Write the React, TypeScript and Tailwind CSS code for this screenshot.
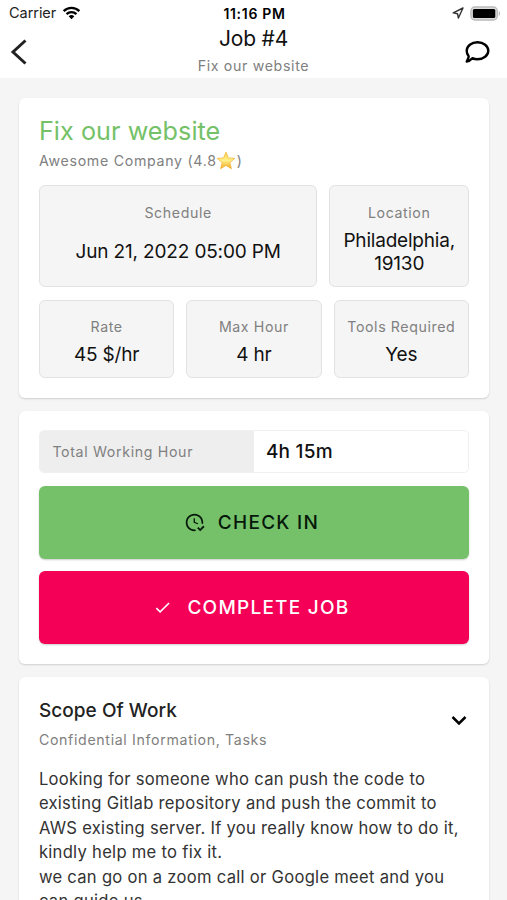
import type { ReactNode } from "react";

interface StatProps {
  label: string;
  children: ReactNode;
  className?: string;
}

const scope = [
  "Looking for someone who can push the code to existing Gitlab repository and push the commit to AWS existing server. If you really know how to do it, kindly help me to fix it.",
  "we can go on a zoom call or Google meet and you can guide us.",
];

function WifiIcon() {
  return (
    <svg width="19" height="14" viewBox="0 0 20 15" fill="none" stroke="#000" strokeWidth="2.6">
      <path d="M1.6 5.4a12 12 0 0 1 16.8 0" />
      <path d="M4.7 8.7a7.6 7.6 0 0 1 10.6 0" />
      <path d="M10 14.2l-3-3.1a4.3 4.3 0 0 1 6 0z" fill="#000" stroke="none" />
    </svg>
  );
}

function StatusBar() {
  return (
    <div className="flex h-[26px] items-center text-[14.5px] leading-[26px]">
      <div className="flex flex-1 items-center gap-[6px] pl-[9px] text-[#222]">
        <span className="tracking-[-0.05px]">Carrier</span>
        <WifiIcon />
      </div>
      <span className="pt-[1px] pr-[1px] text-[14px] font-semibold tracking-[0.7px] text-black">11:16 PM</span>
      <div className="flex flex-1 items-center justify-end gap-[6px] pr-[6px]">
        <svg width="12" height="12" viewBox="0 0 12 12" fill="none" stroke="#333" strokeWidth="1.4" strokeLinejoin="round">
          <path d="M11 1L1.2 5.9l4.3.8.9 4.3z" />
        </svg>
        <svg width="31" height="15" viewBox="0 0 31 15">
          <rect x=".9" y="1" width="26.4" height="13" rx="4" fill="#ddd" stroke="#bbb" strokeWidth="1.4" />
          <rect x="2.9" y="3" width="22.4" height="9" rx="1.5" fill="#000" />
          <path d="M28.8 5v5c1.8-.8 1.8-4.2 0-5z" fill="#bbb" />
        </svg>
      </div>
    </div>
  );
}

function Header() {
  return (
    <header className="h-[78px] bg-white">
      <StatusBar />
      <div className="grid h-[52px] grid-cols-[1fr_auto_1fr] items-start">
        <svg className="mt-[12px] ml-[10px]" width="18" height="28" viewBox="0 0 18 28" fill="none" stroke="#222" strokeWidth="3">
          <path d="M15.5 2.5L3 14l12.5 11.500" />
        </svg>
        <div className="flex flex-col items-center">
          <h1 className="mt-[1px] text-[21px] leading-[24px] tracking-[-0.2px] text-[#111]">Job #4</h1>
          <p className="mt-[5px] text-[14.2px] leading-[20px] tracking-[0.65px] text-[#808080]">Fix our website</p>
        </div>
        <svg className="mt-[14px] mr-[17px] justify-self-end" width="26" height="24" viewBox="0 0 26 24">
          <path
            d="M13.5 2.300c6 0 10.800 3.800 10.800 8.500s-4.800 8.500-10.800 8.500c-1.900 0-3.700-.4-5.200-1.100-1.500 1.700-3.300 3-5.600 3.400 1-1.600 1.800-3.200 2-5.200-1.300-1.500-2-3.500-2-5.600 0-4.700 4.800-8.500 10.800-8.500z"
            fill="none"
            stroke="#000"
            strokeWidth="2.4"
            strokeLinejoin="round"
          />
        </svg>
      </div>
    </header>
  );
}

function Card({ children, className = "" }: { children: ReactNode; className?: string }) {
  return (
    <section className={`rounded-[6px] bg-white px-[19.5px] shadow-[0_1px_2px_rgba(0,0,0,0.16)] ${className}`}>
      {children}
    </section>
  );
}

function Stat({ label, children, className = "" }: StatProps) {
  return (
    <div className={`flex flex-col items-center rounded-[6px] border border-[#e2e2e2] bg-[#f5f5f5] text-center ${className}`}>
      <span className="text-[14.2px] leading-[20px] tracking-[0.6px] whitespace-nowrap text-[#808080]">{label}</span>
      {children}
    </div>
  );
}

function Star() {
  return (
    <svg className="-ml-[1px] mr-[1px] inline-block align-[-4px]" width="20" height="19" viewBox="0 0 20 19">
      <defs>
        <linearGradient id="star" x1="0" y1="0" x2="0" y2="1">
          <stop offset="0" stopColor="#fbd24a" />
          <stop offset=".5" stopColor="#fff08a" />
          <stop offset="1" stopColor="#f2a51f" />
        </linearGradient>
      </defs>
      <path
        d="M10 1.200l2.400 5.700 6.400.5-4.900 4.100 1.500 6.200-5.400-3.300-5.400 3.300 1.500-6.200L1.200 7.400l6.400-.5z"
        fill="url(#star)"
        stroke="#f3b63a"
        strokeWidth=".8"
        strokeLinejoin="round"
      />
    </svg>
  );
}

export default function App() {
  return (
    <div className="h-[900px] w-[507px] overflow-hidden bg-[#f5f5f5] font-['Inter','Liberation_Sans',sans-serif]">
      <Header />
      <main className="flex flex-col gap-[13px] pt-[19.5px] pr-[18.5px] pl-[19.4px]">
        <Card className="h-[300px] pt-[18px]">
          <h2 className="text-[25.2px] leading-[30px] tracking-[0.05px] text-[#74c168]">Fix our website</h2>
          <p className="mt-[5px] h-[20px] text-[14.2px] leading-[20px] tracking-[0.7px] whitespace-nowrap text-[#808080]">
            Awesome Company (4.8
            <Star />)
          </p>
          <div className="mt-[14.5px] flex gap-[12px]">
            <Stat label="Schedule" className="h-[102px] w-[278.5px] pt-[17px]">
              <span className="mt-[17px] text-[19px] leading-[24px] tracking-[-0.15px] text-[#111]">Jun 21, 2022 05:00 PM</span>
            </Stat>
            <Stat label="Location" className="h-[102px] flex-1 pt-[17px]">
              <span className="mt-[6px] text-[19px] leading-[23px] tracking-[-0.2px] text-[#111]">
                Philadelphia,
                <br />
                19130
              </span>
            </Stat>
          </div>
          <div className="mt-[12.5px] grid grid-cols-3 gap-[12px]">
            <Stat label="Rate" className="h-[78.5px] pt-[16.5px]">
              <span className="mt-[5.5px] text-[19px] leading-[24px] tracking-[-0.2px] text-[#111]">45 $/hr</span>
            </Stat>
            <Stat label="Max Hour" className="h-[78.5px] pt-[16.5px]">
              <span className="mt-[5.5px] text-[19px] leading-[24px] tracking-[-0.2px] text-[#111]">4 hr</span>
            </Stat>
            <Stat label="Tools Required" className="h-[78.5px] pt-[16.5px]">
              <span className="mt-[5.5px] text-[19px] leading-[24px] tracking-[-0.2px] text-[#111]">Yes</span>
            </Stat>
          </div>
        </Card>

        <Card className="h-[253px] pt-[19px]">
          <div className="flex h-[43.5px] items-center overflow-hidden rounded-[5px] border border-[#f0f0f0]">
            <div className="flex h-full w-[214px] items-center bg-[#eee] pl-[12.5px] text-[14.2px] tracking-[0.65px] text-[#808080]">
              Total Working Hour
            </div>
            <div className="pt-[1px] pl-[12px] text-[19px] font-medium tracking-[0.25px] text-[#111]">4h 15m</div>
          </div>
          <button className="mt-[12.5px] flex h-[73px] w-full items-center justify-center rounded-[6px] bg-[#75c16a] pr-[5px] shadow-[0_1px_2px_rgba(0,0,0,0.2)]">
            <svg className="mr-[13px]" width="21" height="21" viewBox="0 0 24 24" fill="#06180a">
              <path d="M23.5 17l-5 5-3.500-3.500 1.500-1.500 2 2 3.500-3.500 1.500 1.500M13.100 19.900c-.4.1-.7.1-1.100.1-4.400 0-8-3.600-8-8s3.600-8 8-8 8 3.600 8 8c0 .4 0 .7-.1 1.100.7.1 1.300.3 1.900.6.1-.6.2-1.100.2-1.700 0-5.500-4.500-10-10-10S2 6.500 2 12s4.500 10 10 10c.6 0 1.200-.1 1.700-.2-.3-.5-.5-1.200-.6-1.900M15.600 14.100L11 12.300V7h1.500v4.300l3.900 1.500c-.3.4-.6.8-.8 1.300z" />
            </svg>
            <span className="pt-[2px] text-[19px] font-medium tracking-[1.25px] text-[#06180a]">CHECK IN</span>
          </button>
          <button className="mt-[12px] flex h-[73px] w-full items-center justify-center rounded-[6px] bg-[#f50057] pr-[5px] shadow-[0_1px_2px_rgba(0,0,0,0.2)]">
            <svg className="mr-[15px]" width="19" height="19" viewBox="0 0 24 24" fill="#fff">
              <path d="M21 7L9 19l-5.500-5.500 1.410-1.410L9 16.170 19.590 5.590 21 7z" />
            </svg>
            <span className="pt-[2px] text-[19px] font-medium tracking-[1.25px] text-white">COMPLETE JOB</span>
          </button>
        </Card>

        <Card className="h-[300px] pt-[21px]">
          <div className="flex items-center justify-between">
            <div>
              <h3 className="text-[19px] leading-[26px] font-medium tracking-[0.05px] text-[#222]">Scope Of Work</h3>
              <p className="mt-[6.5px] text-[14.2px] leading-[20px] tracking-[0.65px] text-[#808080]">
                Confidential Information, Tasks
              </p>
            </div>
            <svg className="mt-[-5px] mr-[2px]" width="16" height="12" viewBox="0 0 16 12" fill="none" stroke="#000" strokeWidth="2.5">
              <path d="M1.500 2L8 8.500 14.500 2" />
            </svg>
          </div>
          <div className="mt-[17px] text-[16.6px] leading-[24.4px] tracking-[0.28px] text-[#333]">
            {scope.map((line) => (
              <p key={line}>{line}</p>
            ))}
          </div>
        </Card>
      </main>
    </div>
  );
}
